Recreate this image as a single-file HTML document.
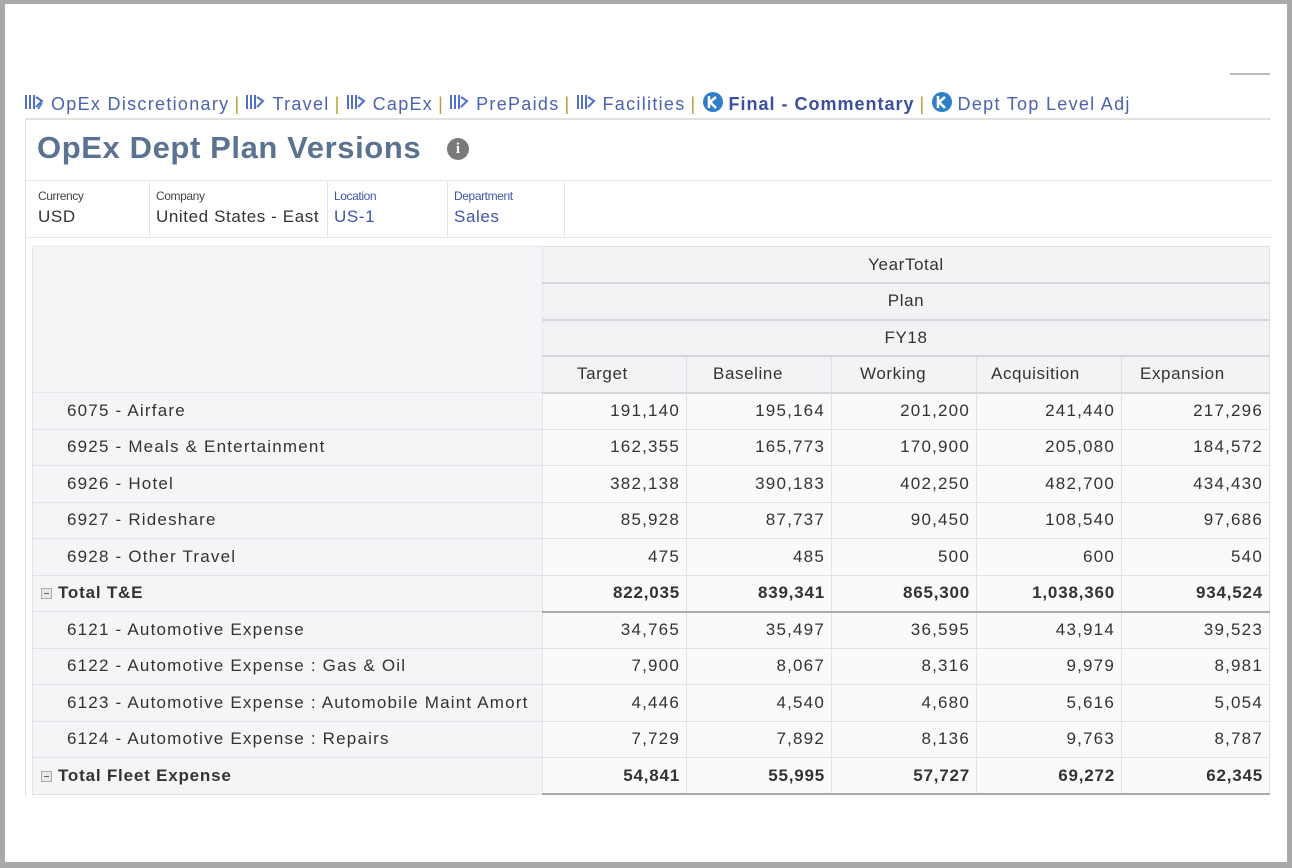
<!DOCTYPE html>
<html><head><meta charset="utf-8"><style>
*{margin:0;padding:0;box-sizing:border-box}
body{width:1292px;height:868px;background:#a9a9a9;font-family:"Liberation Sans",sans-serif;position:relative;overflow:hidden}
#page{position:absolute;left:5px;top:4px;width:1282px;height:858px;background:#fff}
.a{position:absolute}
.tabs{left:24px;top:91px;font-size:18px;color:#4a63b0;white-space:nowrap;letter-spacing:1.3px}
.tabs span.sep{color:#b89a3a;margin:0 5px}
.ic{display:inline-block;vertical-align:-3px;margin-right:5px}
.panel{left:25px;top:118px;width:1246px;height:678px;border-left:1px solid #ddd;border-top:2px solid #e2e2e2}
.title{left:37px;top:130px;font-size:31px;color:#5b7290;font-weight:bold;letter-spacing:0.6px}
.info{left:447px;top:138px;width:22px;height:22px;border-radius:50%;background:#7a7a7a;color:#fff;font-size:15px;font-weight:bold;text-align:center;line-height:22px;font-family:"Liberation Serif",serif}
.pov{left:26px;top:180px;width:1246px;height:58px;border-top:1px solid #e5e5e5;border-bottom:1px solid #e5e5e5}
.pc{position:absolute;top:182px;height:54px;border-right:1px solid #e3e3e3;padding:7px 0 0 6px}
.pc .l{font-size:12px;color:#444;letter-spacing:-0.4px}
.pc .v{font-size:17px;margin-top:4px;color:#333;letter-spacing:0.6px;white-space:nowrap}
.pc.b .l,.pc.b .v{color:#3f55a8}
table{position:absolute;left:32px;top:246px;border-collapse:collapse;font-size:17px;color:#333;letter-spacing:1.2px;table-layout:fixed;width:1237px}
td{border:1px solid #e0e2e6;height:36.5px;padding:0 6px;white-space:nowrap;overflow:hidden}
.hd td.h{background:#f2f3f5;text-align:center;border-bottom:2px solid #d5d7db;letter-spacing:0.6px}
.corner{background:#f4f5f7;border:1px solid #e6e7ea}
td.lb{background:#f4f5f7;padding-left:34px}
td.n{text-align:right;background:#fafafa}
tr.t td{font-weight:bold;letter-spacing:0.8px}
tr.t td.lb{padding-left:8px}
tr.t td.n{border-bottom:2px solid #aaa}
.box{display:inline-block;width:11px;height:11px;border:1px solid #aaa;background:#e8e8e8;vertical-align:-1px;margin-right:6px;position:relative}
.box:after{content:"";position:absolute;left:2px;top:4px;width:5px;height:1px;background:#666}
.cap{left:1230px;top:73px;width:40px;height:2px;background:#bbb}
</style></head><body><div id="page"></div>
<div class="a cap"></div>
<div class="a tabs">
<svg class="ic" width="22" height="20" viewBox="0 0 22 20"><g stroke="#4f6fc8" stroke-width="2"><path d="M2 2v14M6 2v14M10 2v14"/><path d="M12 4l6 4-6 6" fill="none"/><path d="M14 16l4-6" stroke="#3b8bd8"/></g></svg>OpEx Discretionary<span class="sep">|</span><svg class="ic" width="22" height="20" viewBox="0 0 22 20"><g stroke="#4f6fc8" stroke-width="2"><path d="M2 2v14M6 2v14M10 2v14"/><path d="M12 4l6 4-6 6" fill="none"/></g></svg>Travel<span class="sep">|</span><svg class="ic" width="22" height="20" viewBox="0 0 22 20"><g stroke="#4f6fc8" stroke-width="2"><path d="M2 2v14M6 2v14M10 2v14"/><path d="M12 4l6 4-6 6" fill="none"/></g></svg>CapEx<span class="sep">|</span><svg class="ic" width="22" height="20" viewBox="0 0 22 20"><g stroke="#4f6fc8" stroke-width="2"><path d="M2 2v14M6 2v14M10 2v14"/><path d="M12 4l6 4-6 6" fill="none"/></g></svg>PrePaids<span class="sep">|</span><svg class="ic" width="22" height="20" viewBox="0 0 22 20"><g stroke="#4f6fc8" stroke-width="2"><path d="M2 2v14M6 2v14M10 2v14"/><path d="M12 4l6 4-6 6" fill="none"/></g></svg>Facilities<span class="sep">|</span><svg class="ic" width="22" height="22" viewBox="0 0 22 22"><circle cx="11" cy="11" r="10" fill="#2f7fc8"/><path d="M7 5v12M8 11l6-5M8 11l6 6" stroke="#fff" stroke-width="2.5"/></svg><b style="color:#3a4fa0;letter-spacing:1px">Final - Commentary</b><span class="sep">|</span><svg class="ic" width="22" height="22" viewBox="0 0 22 22"><circle cx="11" cy="11" r="10" fill="#2f7fc8"/><path d="M7 5v12M8 11l6-5M8 11l6 6" stroke="#fff" stroke-width="2.5"/></svg>Dept Top Level Adj</div>
<div class="a panel"></div>
<div class="a title">OpEx Dept Plan Versions</div>
<div class="a info">i</div>
<div class="a pov"></div>
<div class="pc" style="left:32px;width:118px"><div class="l">Currency</div><div class="v">USD</div></div>
<div class="pc" style="left:150px;width:178px"><div class="l">Company</div><div class="v">United States - East</div></div>
<div class="pc b" style="left:328px;width:120px"><div class="l">Location</div><div class="v">US-1</div></div>
<div class="pc b" style="left:448px;width:117px"><div class="l">Department</div><div class="v">Sales</div></div>
<table>
<colgroup><col style="width:510px"><col style="width:144px"><col style="width:145px"><col style="width:145px"><col style="width:145px"><col style="width:148px"></colgroup>
<tr class="hd"><td class="corner" rowspan="4"></td><td class="h" colspan="5">YearTotal</td></tr>
<tr class="hd"><td class="h" colspan="5">Plan</td></tr>
<tr class="hd"><td class="h" colspan="5">FY18</td></tr>
<tr class="hd"><td class="h" style="text-align:left;padding-left:34px">Target</td><td class="h" style="text-align:left;padding-left:26px">Baseline</td><td class="h" style="text-align:left;padding-left:28px">Working</td><td class="h" style="text-align:left;padding-left:14px">Acquisition</td><td class="h" style="text-align:left;padding-left:18px">Expansion</td></tr>
<tr><td class="lb">6075 - Airfare</td><td class="n">191,140</td><td class="n">195,164</td><td class="n">201,200</td><td class="n">241,440</td><td class="n">217,296</td></tr>
<tr><td class="lb">6925 - Meals &amp; Entertainment</td><td class="n">162,355</td><td class="n">165,773</td><td class="n">170,900</td><td class="n">205,080</td><td class="n">184,572</td></tr>
<tr><td class="lb">6926 - Hotel</td><td class="n">382,138</td><td class="n">390,183</td><td class="n">402,250</td><td class="n">482,700</td><td class="n">434,430</td></tr>
<tr><td class="lb">6927 - Rideshare</td><td class="n">85,928</td><td class="n">87,737</td><td class="n">90,450</td><td class="n">108,540</td><td class="n">97,686</td></tr>
<tr><td class="lb">6928 - Other Travel</td><td class="n">475</td><td class="n">485</td><td class="n">500</td><td class="n">600</td><td class="n">540</td></tr>
<tr class="t"><td class="lb"><span class="box"></span>Total T&amp;E</td><td class="n">822,035</td><td class="n">839,341</td><td class="n">865,300</td><td class="n">1,038,360</td><td class="n">934,524</td></tr>
<tr><td class="lb">6121 - Automotive Expense</td><td class="n">34,765</td><td class="n">35,497</td><td class="n">36,595</td><td class="n">43,914</td><td class="n">39,523</td></tr>
<tr><td class="lb">6122 - Automotive Expense : Gas &amp; Oil</td><td class="n">7,900</td><td class="n">8,067</td><td class="n">8,316</td><td class="n">9,979</td><td class="n">8,981</td></tr>
<tr><td class="lb">6123 - Automotive Expense : Automobile Maint Amort</td><td class="n">4,446</td><td class="n">4,540</td><td class="n">4,680</td><td class="n">5,616</td><td class="n">5,054</td></tr>
<tr><td class="lb">6124 - Automotive Expense : Repairs</td><td class="n">7,729</td><td class="n">7,892</td><td class="n">8,136</td><td class="n">9,763</td><td class="n">8,787</td></tr>
<tr class="t"><td class="lb"><span class="box"></span>Total Fleet Expense</td><td class="n">54,841</td><td class="n">55,995</td><td class="n">57,727</td><td class="n">69,272</td><td class="n">62,345</td></tr>
</table>
</body></html>
